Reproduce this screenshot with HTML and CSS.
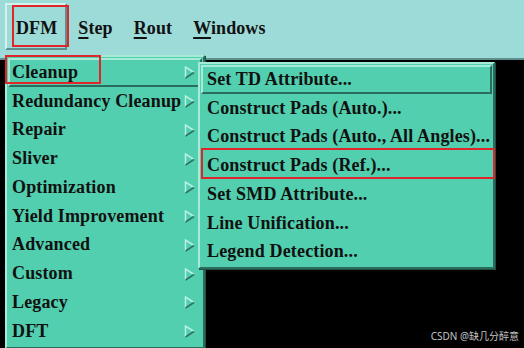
FILE: index.html
```html
<!DOCTYPE html>
<html lang="en">
<head>
    <meta charset="UTF-8">
    <meta name="viewport" content="width=device-width, initial-scale=1.0">
    <title>DFM Menu</title>
    <link rel="stylesheet" href="styles.css">
</head>
<body>
    <div class="screen">
        <div class="menubar">
            <span class="menu-title active">DFM</span>
            <span class="menu-title"><u>S</u>tep</span>
            <span class="menu-title"><u>R</u>out</span>
            <span class="menu-title"><u>W</u>indows</span>
        </div>
        <div class="workspace"></div>

        <ul class="menu main-menu">
            <li class="item armed"><span>Cleanup</span><svg class="arrow" viewBox="0 0 11 13" width="11" height="13"><path d="M1.5,12 L1.5,1 L10,6.5" class="hi"/><path d="M10,6.5 L1.5,12" class="lo"/></svg></li>
            <li class="item"><span>Redundancy Cleanup</span><svg class="arrow" viewBox="0 0 11 13" width="11" height="13"><path d="M1.5,12 L1.5,1 L10,6.5" class="hi"/><path d="M10,6.5 L1.5,12" class="lo"/></svg></li>
            <li class="item"><span>Repair</span><svg class="arrow" viewBox="0 0 11 13" width="11" height="13"><path d="M1.5,12 L1.5,1 L10,6.5" class="hi"/><path d="M10,6.5 L1.5,12" class="lo"/></svg></li>
            <li class="item"><span>Sliver</span><svg class="arrow" viewBox="0 0 11 13" width="11" height="13"><path d="M1.5,12 L1.5,1 L10,6.5" class="hi"/><path d="M10,6.5 L1.5,12" class="lo"/></svg></li>
            <li class="item"><span>Optimization</span><svg class="arrow" viewBox="0 0 11 13" width="11" height="13"><path d="M1.5,12 L1.5,1 L10,6.5" class="hi"/><path d="M10,6.5 L1.5,12" class="lo"/></svg></li>
            <li class="item"><span>Yield Improvement</span><svg class="arrow" viewBox="0 0 11 13" width="11" height="13"><path d="M1.5,12 L1.5,1 L10,6.5" class="hi"/><path d="M10,6.5 L1.5,12" class="lo"/></svg></li>
            <li class="item"><span>Advanced</span><svg class="arrow" viewBox="0 0 11 13" width="11" height="13"><path d="M1.5,12 L1.5,1 L10,6.5" class="hi"/><path d="M10,6.5 L1.5,12" class="lo"/></svg></li>
            <li class="item"><span>Custom</span><svg class="arrow" viewBox="0 0 11 13" width="11" height="13"><path d="M1.5,12 L1.5,1 L10,6.5" class="hi"/><path d="M10,6.5 L1.5,12" class="lo"/></svg></li>
            <li class="item"><span>Legacy</span><svg class="arrow" viewBox="0 0 11 13" width="11" height="13"><path d="M1.5,12 L1.5,1 L10,6.5" class="hi"/><path d="M10,6.5 L1.5,12" class="lo"/></svg></li>
            <li class="item"><span>DFT</span><svg class="arrow" viewBox="0 0 11 13" width="11" height="13"><path d="M1.5,12 L1.5,1 L10,6.5" class="hi"/><path d="M10,6.5 L1.5,12" class="lo"/></svg></li>
        </ul>

        <ul class="menu sub-menu">
            <li class="item armed">Set TD Attribute...</li>
            <li class="item">Construct Pads (Auto.)...</li>
            <li class="item">Construct Pads (Auto., All Angles)...</li>
            <li class="item">Construct Pads (Ref.)...</li>
            <li class="item">Set SMD Attribute...</li>
            <li class="item">Line Unification...</li>
            <li class="item">Legend Detection...</li>
        </ul>

        <!-- red annotation boxes -->
        <div class="mark mark-dfm"></div>
        <div class="mark mark-cleanup"></div>
        <div class="mark mark-ref"></div>

        <span class="watermark">CSDN @缺几分醉意</span>
    </div>
</body>
</html>
```

FILE: styles.css
```css
body {
    margin: 0;
    background: #000;
    font-family: "Liberation Serif", "Times New Roman", serif;
}
.screen {
    position: relative;
    width: 524px;
    height: 348px;
    display: flex;
    flex-direction: column;
    overflow: hidden;
}
.menubar {
    height: 60px;
    flex: none;
    background: #9ddbd9;
    border-bottom: 2px solid #5d8f8d;
    display: flex;
    align-items: flex-start;
    padding: 3px 0 0 5px;
    box-sizing: border-box;
    gap: 1px;
}
.menu-title {
    font-weight: bold;
    font-size: 18px;
    letter-spacing: 0.1px;
    color: #111;
    height: 47px;
    line-height: 50px;
    padding: 0 10px;
    box-sizing: border-box;
}
.menu-title u {
    text-decoration-thickness: 1.5px;
    text-underline-offset: 3px;
}
.menu-title.active {
    padding: 0 8px 0 9px;
    line-height: 46px;
    border: 2px solid;
    border-color: #d2f2f0 #5f8f8d #5f8f8d #d2f2f0;
}
.workspace {
    flex: 1;
    background: #000;
}
.menu {
    position: absolute;
    list-style: none;
    margin: 0;
    padding: 1px;
    background: #52cfae;
    border: 2px solid;
    border-color: #a6ead8 #2c6c5c #2c6c5c #a6ead8;
    box-shadow: 1px 1px 0 #1f4f43;
}
.main-menu {
    left: 5px;
    top: 55px;
    width: 194px;
}
.sub-menu {
    left: 198px;
    top: 62px;
    width: 291px;
}
.item {
    display: flex;
    align-items: center;
    justify-content: space-between;
    height: 28.75px;
    box-sizing: border-box;
    border: 2px solid transparent;
    padding: 0 5px 0 2px;
    font-weight: bold;
    font-size: 18px;
    letter-spacing: 0.15px;
    color: #111;
    white-space: nowrap;
}
.sub-menu .item {
    padding-left: 4px;
}
.item.armed {
    border-color: #a6ead8 #2c6c5c #2c6c5c #a6ead8;
}
.arrow {
    flex: none;
    margin-top: 1px;
}
.arrow path {
    fill: none;
    stroke-width: 1.5;
}
.arrow .hi {
    stroke: #b8f0e2;
}
.arrow .lo {
    stroke: #2e7463;
}
.mark {
    position: absolute;
    border: 2px solid #e0252b;
    box-sizing: border-box;
}
.mark-dfm {
    left: 12px;
    top: 5px;
    width: 57px;
    height: 42px;
}
.mark-cleanup {
    left: 5px;
    top: 55px;
    width: 96px;
    height: 29px;
}
.mark-ref {
    left: 201px;
    top: 148px;
    width: 294px;
    height: 31px;
}
.watermark {
    position: absolute;
    right: 5px;
    bottom: 5px;
    font-family: "Noto Sans", "Noto Sans CJK SC", sans-serif;
    font-size: 10px;
    color: #c4c4c4;
}
```
